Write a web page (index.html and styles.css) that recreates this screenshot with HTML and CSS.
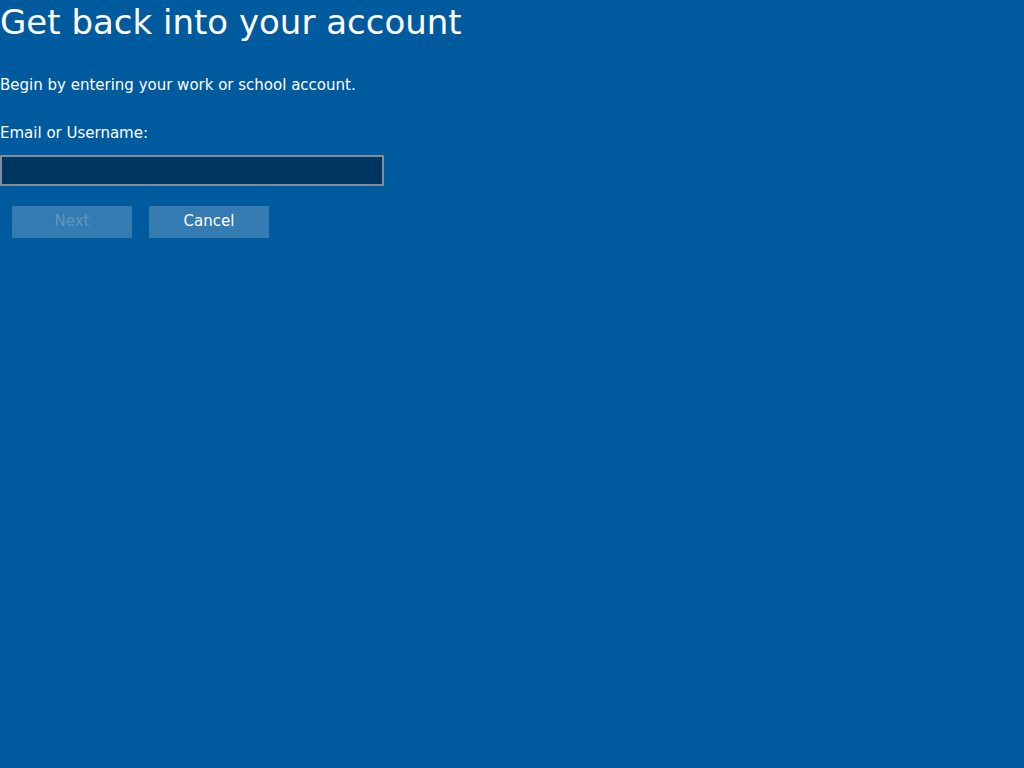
FILE: index.html
```html
<!DOCTYPE html>
<html>
<head>
<meta charset="utf-8">
<link rel="stylesheet" href="styles.css">
</head>
<body>
<div class="page">
  <h1 class="title">Get back into your account</h1>
  <p class="intro">Begin by entering your work or school account.</p>
  <label class="label" for="user">Email or Username:</label>
  <input class="field" id="user" type="text">
  <div class="actions">
    <button class="btn btn-disabled">Next</button>
    <button class="btn">Cancel</button>
  </div>
</div>
</body>
</html>
```
FILE: styles.css
```css
html, body {
  margin: 0;
  padding: 0;
  background: #005a9e;
  height: 100%;
}
body {
  font-family: "DejaVu Sans", sans-serif;
  color: #ffffff;
}
.page {
  display: flex;
  flex-direction: column;
  align-items: flex-start;
}
.title {
  margin: 0;
  font-size: 34px;
  font-weight: normal;
  line-height: 44px;
}
.intro {
  margin: 31px 0 0 0;
  font-size: 15px;
  line-height: 20px;
}
.label {
  margin-top: 28px;
  font-size: 15px;
  line-height: 20px;
}
.field {
  margin-top: 12px;
  box-sizing: border-box;
  width: 384px;
  height: 31px;
  background: #00365f;
  border: 2px solid #7d8fa3;
  color: #fff;
  outline: none;
  padding: 0 6px;
  font-family: inherit;
}
.actions {
  display: flex;
  gap: 17px;
  margin-top: 20px;
  padding-left: 12px;
}
.btn {
  width: 120px;
  height: 32px;
  border: none;
  background: #337bb1;
  color: #ffffff;
  font-family: "DejaVu Sans", sans-serif;
  font-size: 15px;
  line-height: 30px;
  padding: 0 0 2px 0;
}
.btn-disabled {
  color: #5e94c2;
}
```
